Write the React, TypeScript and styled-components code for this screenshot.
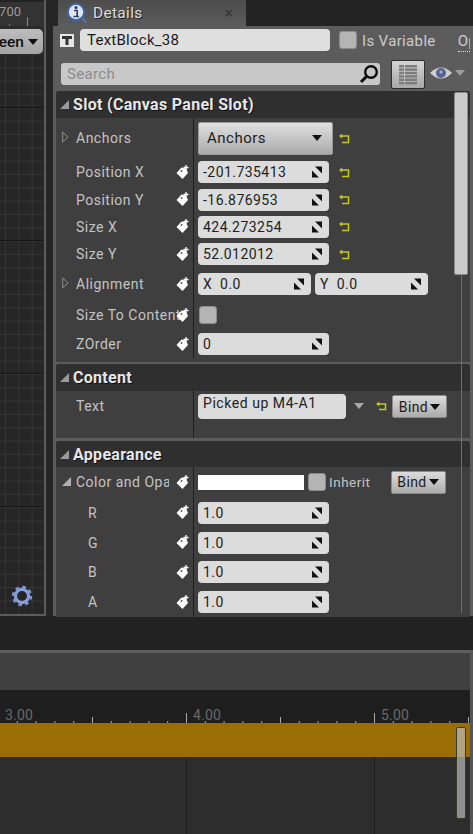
import React from "react";
import styled, { createGlobalStyle } from "styled-components";

const GlobalStyle = createGlobalStyle`
    html, body {
        margin: 0;
        padding: 0;
        background: #222222;
        overflow: hidden;
    }
    * {
        box-sizing: border-box;
    }
`;

const Page = styled.div`
    width: 473px;
    height: 834px;
    display: flex;
    flex-direction: column;
    overflow: hidden;
    background: #222222;
    font-family: Roboto, "Liberation Sans", sans-serif;
`;

const TopArea = styled.div`
    height: 616px;
    display: flex;
    flex-shrink: 0;
`;

/* left graph panel */
const GraphPanel = styled.div`
    width: 46px;
    flex-shrink: 0;
    display: flex;
    flex-direction: column;
    border-right: 2px solid #5c5c5c;
    border-bottom: 2px solid #5c5c5c;
    position: relative;
    overflow: hidden;
`;

const GraphRuler = styled.div`
    height: 24px;
    margin-top: 2px;
    flex-shrink: 0;
    background-color: #333333;
    background-image:
        linear-gradient(90deg, #8a8a8a 1px, transparent 1px),
        linear-gradient(90deg, #777777 1px, transparent 1px);
    background-size: 1px 9px, 18px 2px;
    background-position: 27px 100%, 9px 100%;
    background-repeat: no-repeat, repeat-x;
    color: #9a9a9a;
    font-size: 13px;
    line-height: 20px;
    display: flex;
    justify-content: flex-end;
    padding-right: 23px;
    white-space: nowrap;
`;

const GraphToolbar = styled.div`
    height: 29px;
    flex-shrink: 0;
    display: flex;
    justify-content: flex-end;
    align-items: flex-start;
    background: #2b2b2b;
    padding-top: 3px;
    padding-right: 1px;
`;

const ScreenCombo = styled.div`
    height: 25px;
    flex-shrink: 0;
    display: flex;
    align-items: center;
    gap: 4px;
    padding: 0 5px;
    border-radius: 5px;
    background: linear-gradient(#bdbdbd, #a4a4a4);
    color: #111111;
    font-size: 15.5px;
    font-weight: 500;
    white-space: nowrap;
`;

const GraphCanvas = styled.div`
    flex: 1;
    position: relative;
    background-color: #262626;
    background-image:
        linear-gradient(#161616 1px, transparent 1px),
        linear-gradient(#343434 1px, transparent 1px),
        linear-gradient(90deg, #343434 1px, transparent 1px);
    background-size: 100% 133px, 13.33px 13.33px, 13.33px 13.33px;
    background-position: 0 52px, 0 -1px, 5px 0;
`;

const GearSlot = styled.div`
    position: absolute;
    left: 11px;
    bottom: 7px;
    width: 22px;
    height: 22px;
`;

const Gutter = styled.div`
    width: 7px;
    flex-shrink: 0;
    background: #262626;
`;

/* details panel */
const DetailsPanel = styled.div`
    flex: 1;
    min-width: 0;
    display: flex;
    flex-direction: column;
    position: relative;
`;

const TabStrip = styled.div`
    height: 26px;
    flex-shrink: 0;
    display: flex;
    background: #232323;
`;

const TabNeck = styled.div`
    width: 5px;
    flex-shrink: 0;
    background: #262626;
`;

const DetailsTab = styled.div`
    width: 188px;
    display: flex;
    align-items: center;
    padding: 0 13px 0 8px;
    background: linear-gradient(#4c4c4c, #5c5c5c);
    color: #dcdcdc;
    font-size: 15.5px;
    letter-spacing: 0.3px;
    text-shadow: 1px 1px 0 #222222;
`;

const TabTitle = styled.span`
    flex: 1;
    margin-left: 5px;
`;

const TabClose = styled.span`
    color: #3a3a3a;
    font-size: 15px;
    font-weight: 700;
    text-shadow: none;
`;

const PanelBody = styled.div`
    flex: 1;
    min-height: 0;
    display: flex;
    flex-direction: column;
    background: #5c5c5c;
    padding: 0 3px 3px 3px;
    position: relative;
`;

const NameRow = styled.div`
    height: 34px;
    flex-shrink: 0;
    display: flex;
    align-items: flex-start;
    padding-top: 3px;
    overflow: hidden;
`;

const TypeBadge = styled.div`
    width: 14px;
    height: 13px;
    margin: 5px 6px 0 4px;
    flex-shrink: 0;
    display: flex;
    align-items: center;
    justify-content: center;
    background: #e6e6e6;
`;

const NameInput = styled.div`
    width: 250px;
    height: 22px;
    flex-shrink: 0;
    display: flex;
    align-items: center;
    padding-left: 7px;
    border-radius: 4px;
    background: #dfdfdf;
    color: #1a1a1a;
    font-size: 15px;
    letter-spacing: 0.25px;
`;

const CheckBox = styled.div<{ $margin?: string }>`
    width: 18px;
    height: 18px;
    flex-shrink: 0;
    margin: ${props => props.$margin || "0"};
    border-radius: 3px;
    background: #b4b4b4;
    border: 1px solid #8c8c8c;
`;

const OptionLabel = styled.span`
    color: #cccccc;
    font-size: 15px;
    letter-spacing: 0.35px;
    white-space: nowrap;
`;

const VariableLabel = styled(OptionLabel)`
    margin: 3px 0 0 5px;
`;

const OptionsLink = styled(OptionLabel)`
    margin: 3px 0 0 22px;
    padding-bottom: 2px;
    border-bottom: 1px dotted #dddddd;
    height: 20px;
`;

const SearchRow = styled.div`
    height: 31px;
    flex-shrink: 0;
    display: flex;
    align-items: flex-start;
`;

const SearchBox = styled.div`
    width: 319px;
    height: 22px;
    margin: 3px 0 0 5px;
    flex-shrink: 0;
    display: flex;
    align-items: center;
    justify-content: space-between;
    padding: 0 1px 0 6px;
    border-radius: 3px;
    background: #c8c8c8;
    color: #8c8c8c;
    font-size: 15px;
    letter-spacing: 0.35px;
`;

const GridButton = styled.div`
    width: 34px;
    height: 29px;
    margin-left: 11px;
    flex-shrink: 0;
    display: flex;
    align-items: center;
    justify-content: center;
    border-radius: 2px;
    border: 1px solid #2e2e2e;
    background: linear-gradient(#d4d4d4, #a8a8a8);
`;

const EyeSlot = styled.div`
    margin: 6px 0 0 5px;
    display: flex;
    align-items: center;
    gap: 3px;
`;

const Section = styled.section<{ $grow?: boolean; $gap?: number }>`
    flex-shrink: 0;
    flex-grow: ${props => (props.$grow ? 1 : 0)};
    min-height: 0;
    overflow: hidden;
    background: #3f3f3f;
    border-radius: 3px 3px 0 0;
    margin-bottom: ${props => props.$gap ?? 0}px;
`;

const SectionHeader = styled.div<{ $h: number }>`
    height: ${props => props.$h}px;
    display: flex;
    align-items: center;
    background: #2f2f2f;
    color: #e6e6e6;
    font-size: 16px;
    font-weight: 700;
    letter-spacing: 0.3px;
    text-shadow: 1px 1px 0 #111111;
    padding-left: 4px;
    gap: 4px;
`;

const Row = styled.div<{ $h: number }>`
    height: ${props => props.$h}px;
    display: flex;
`;

const NameCell = styled.div<{ $indent?: number; $raise?: number }>`
    width: 137px;
    flex-shrink: 0;
    display: flex;
    align-items: center;
    padding-left: ${props => props.$indent ?? 20}px;
    padding-right: 4px;
    padding-bottom: ${props => props.$raise ?? 0}px;
    position: relative;
    overflow: hidden;
`;

const Twist = styled.div`
    position: absolute;
    left: 6px;
    top: 50%;
    margin-top: -7px;
    width: 9px;
    height: 12px;
    display: flex;
`;

const Label = styled.span<{ $clip?: number }>`
    flex: 1;
    min-width: 0;
    color: #c4c4c4;
    font-size: 14px;
    letter-spacing: 0.5px;
    white-space: nowrap;
    ${props => props.$clip ? `max-width: ${props.$clip}px; overflow: hidden; margin-right: auto;` : ""}
`;

const ValueCell = styled.div<{ $align?: string }>`
    flex: 1;
    min-width: 0;
    display: flex;
    align-items: ${props => props.$align || "center"};
    border-left: 1px solid #1e1e1e;
    padding-left: 4px;
`;

const Field = styled.div<{ $w: number }>`
    width: ${props => props.$w}px;
    height: 22px;
    flex-shrink: 0;
    display: flex;
    align-items: center;
    justify-content: space-between;
    padding: 0 6px 0 5px;
    border-radius: 4px;
    background: #dcdcdc;
    color: #222222;
    font-size: 14px;
    letter-spacing: 0.45px;
    white-space: pre;
`;

const FieldGap = styled.div`
    width: 4px;
    flex-shrink: 0;
`;

const AnchorCombo = styled.div`
    width: 135px;
    height: 33px;
    flex-shrink: 0;
    display: flex;
    align-items: center;
    justify-content: space-between;
    padding: 0 10px 0 8px;
    border: 1px solid #9a9a9a;
    border-radius: 2px;
    background: linear-gradient(#e0e0e0, #ababab);
    color: #1c1c1c;
    font-size: 15px;
    letter-spacing: 0.5px;
`;

const ResetSlot = styled.div<{ $left: number }>`
    margin-left: ${props => props.$left}px;
    display: flex;
    flex-shrink: 0;
`;

const TextField = styled.div`
    width: 148px;
    height: 25px;
    margin-top: 3px;
    flex-shrink: 0;
    padding: 1px 0 0 5px;
    border-radius: 4px;
    background: #dcdcdc;
    color: #222222;
    font-size: 14px;
    letter-spacing: 0.55px;
    white-space: nowrap;
`;

const BindButton = styled.div<{ $left: number; $top?: number }>`
    width: 55px;
    height: 23px;
    margin-left: ${props => props.$left}px;
    margin-top: ${props => props.$top ?? 0}px;
    flex-shrink: 0;
    display: flex;
    align-items: center;
    justify-content: center;
    gap: 2px;
    border: 1px solid #8a8a8a;
    border-radius: 2px;
    background: linear-gradient(#dcdcdc, #ababab);
    color: #1c1c1c;
    font-size: 14px;
    letter-spacing: 0.4px;
`;

const Swatch = styled.div`
    width: 106px;
    height: 15px;
    flex-shrink: 0;
    background: #ffffff;
`;

const InheritLabel = styled(Label)`
    flex: none;
    margin-left: 3px;
    font-size: 13.5px;
`;

const ScrollThumb = styled.div`
    position: absolute;
    right: 5px;
    top: 66px;
    width: 14px;
    height: 183px;
    background: #c9c9c9;
    border-radius: 2px;
    border: 1px solid #8e8e8e;
`;

const ScrollTrack = styled.div`
    position: absolute;
    left: 408px;
    top: 249px;
    bottom: 3px;
    width: 1px;
    background: #6e6e6e;
`;

/* sequencer strip */
const BlackBand = styled.div`
    height: 34px;
    flex-shrink: 0;
    background: #222222;
`;

const Timeline = styled.div`
    flex: 1;
    min-height: 0;
    display: flex;
    flex-direction: column;
    border-top: 3px solid #5e5e5e;
    border-right: 3px solid #555555;
    position: relative;
`;

const TimelineHead = styled.div`
    height: 37px;
    flex-shrink: 0;
    background: #404040;
`;

const Ruler = styled.div`
    height: 33px;
    flex-shrink: 0;
    display: flex;
    background: #1e1e1e;
    overflow: hidden;
    padding-left: 0;
`;

const RulerCell = styled.div<{ $first?: boolean }>`
    width: 188px;
    margin-left: ${props => (props.$first ? -2 : 0)}px;
    flex-shrink: 0;
    position: relative;
    padding: 17px 0 0 7px;
    color: #686868;
    font-size: 14px;
    letter-spacing: 0.2px;
    line-height: 16px;
`;

const RulerTicks = styled.svg`
    position: absolute;
    left: 0;
    bottom: 0;
`;

const GoldTrack = styled.div`
    height: 34px;
    flex-shrink: 0;
    background: #9a6e04;
`;

const LowerTrack = styled.div`
    flex: 1;
    background-color: #2d2d2d;
    background-image: linear-gradient(90deg, #1c1c1c 1px, transparent 1px);
    background-size: 188px 100%;
    background-position: -2px 0;
`;

const TimelineThumb = styled.div`
    position: absolute;
    left: 456px;
    top: 74px;
    width: 10px;
    height: 92px;
    border-radius: 2px;
    border: 1px solid #3a3a2a;
    background: rgba(190, 190, 190, 0.68);
`;

function TagIcon() {
    return (
        <svg width="13" height="15" viewBox="0 0 13 15" style={{ flexShrink: 0, position: "relative" }}>
            <polygon points="5.5,2.5 10,3.5 12,8 6.5,14 0.5,8" fill="#ffffff" />
            <circle cx="5.5" cy="6" r="0.9" fill="#555555" />
            <path d="M10 0v5M7.5 2.5h5" stroke="#ffffff" strokeWidth="1.3" />
        </svg>
    );
}

function SpinIcon() {
    return (
        <svg width="12" height="12" viewBox="0 0 12 12" style={{ flexShrink: 0 }}>
            <polygon points="4,0.5 11,0.5 11,7.5" fill="#111111" />
            <polygon points="1,4.5 8,11.5 1,11.5" fill="#111111" />
        </svg>
    );
}

function ResetIcon() {
    return (
        <svg width="11" height="11" viewBox="0 0 11 11">
            <path d="M2 3H9.5V9.5H3" fill="none" stroke="#c6c81e" strokeWidth="1.5" />
            <polygon points="0,3 3.2,0.4 3.2,5.6" fill="#c6c81e" />
        </svg>
    );
}

function DownArrow({ color = "#111111", w = 10 }: { color?: string; w?: number }) {
    return (
        <svg width={w} height={w * 0.6} viewBox="0 0 10 6" style={{ flexShrink: 0 }}>
            <polygon points="0,0 10,0 5,6" fill={color} />
        </svg>
    );
}

function SectionArrow() {
    return (
        <svg width="9" height="9" viewBox="0 0 9 9" style={{ flexShrink: 0 }}>
            <polygon points="9,0 9,9 0,9" fill="#9a9a9a" />
        </svg>
    );
}

function TwistClosed() {
    return (
        <svg width="7" height="12" viewBox="0 0 7 12">
            <polygon points="0.7,1 6,6 0.7,11" fill="none" stroke="#8e8e8e" strokeWidth="1" />
        </svg>
    );
}

function TwistOpen() {
    return (
        <svg width="9" height="12" viewBox="0 0 9 12">
            <polygon points="9,2 9,11 0,11" fill="#b0b0b0" />
        </svg>
    );
}

function DetailsIcon() {
    return (
        <svg width="22" height="22" viewBox="0 0 22 22" style={{ flexShrink: 0 }}>
            <path d="M15 15l5.5 5.5" stroke="#4a76b8" strokeWidth="2.4" />
            <circle cx="10" cy="10" r="8.2" fill="#dfe4ee" stroke="#3f63a8" strokeWidth="2" />
            <circle cx="10" cy="5.6" r="1.6" fill="#33425e" />
            <path d="M8 8.5h3.2v6H13M7.5 14.5h5" fill="none" stroke="#33425e" strokeWidth="1.6" />
        </svg>
    );
}

function TextBadgeIcon() {
    return (
        <svg width="10" height="9" viewBox="0 0 10 9">
            <path d="M0 0H10V3H6.5V9H3.5V3H0Z" fill="#333333" />
        </svg>
    );
}

function SearchIcon() {
    return (
        <svg width="20" height="20" viewBox="0 0 20 20" style={{ flexShrink: 0 }}>
            <circle cx="12" cy="8" r="5.8" fill="none" stroke="#0c0c0c" strokeWidth="2.4" />
            <path d="M7.5 12.5L2 18" stroke="#0c0c0c" strokeWidth="3" />
        </svg>
    );
}

function GridIcon() {
    const rows = [0, 1, 2, 3, 4, 5];
    return (
        <svg width="18" height="20" viewBox="0 0 18 20">
            {rows.map(r => (
                <g key={r} fill="#7c7c7c">
                    <rect x="0" y={r * 3.4} width="5" height="2.4" />
                    <rect x="6" y={r * 3.4} width="12" height="2.4" />
                </g>
            ))}
        </svg>
    );
}

function EyeIcon() {
    return (
        <svg width="22" height="14" viewBox="0 0 22 14" style={{ flexShrink: 0 }}>
            <path d="M0 7Q11 -4 22 7Q11 18 0 7Z" fill="#cfcfcf" />
            <circle cx="11" cy="7" r="5" fill="#57648e" />
            <circle cx="11" cy="6" r="1.6" fill="#a9b3cf" />
        </svg>
    );
}

function GearIcon() {
    return (
        <svg width="22" height="22" viewBox="0 0 22 22">
            <circle cx="11" cy="11" r="6.6" fill="none" stroke="#86a0dc" strokeWidth="3.2" />
            <circle cx="11" cy="11" r="9" fill="none" stroke="#7f98d4" strokeWidth="2.4" strokeDasharray="3.6 3.47" />
        </svg>
    );
}

function Ticks() {
    const minor = [1, 2, 3, 4, 6, 7, 8, 9];
    return (
        <RulerTicks width="188" height="12">
            <rect x="0" y="2" width="1" height="10" fill="#a8a8a8" />
            <rect x="94" y="6" width="1" height="6" fill="#a8a8a8" />
            {minor.map(i => (
                <rect key={i} x={i * 18.8} y="10" width="1" height="2" fill="#a8a8a8" />
            ))}
        </RulerTicks>
    );
}

interface PropertyProps {
    label: string;
    h: number;
    indent?: number;
    twist?: "closed" | "open";
    bound?: boolean;
    align?: string;
    raise?: number;
    clip?: number;
    children?: React.ReactNode;
}

function Property({ label, h, indent, twist, bound = true, align, raise, clip, children }: PropertyProps) {
    return (
        <Row $h={h}>
            <NameCell $indent={indent} $raise={raise}>
                {twist && <Twist>{twist === "closed" ? <TwistClosed /> : <TwistOpen />}</Twist>}
                <Label $clip={clip}>{label}</Label>
                {bound && <TagIcon />}
            </NameCell>
            <ValueCell $align={align}>{children}</ValueCell>
        </Row>
    );
}

function NumberField({ value, w = 131 }: { value: string; w?: number }) {
    return (
        <Field $w={w}>
            {value}
            <SpinIcon />
        </Field>
    );
}

const transformRows = [
    { label: "Position X", value: "-201.735413", h: 28 },
    { label: "Position Y", value: "-16.876953", h: 27 },
    { label: "Size X", value: "424.273254", h: 27 },
    { label: "Size Y", value: "52.012012", h: 28 },
];

const colorRows = [
    { label: "R", h: 31 },
    { label: "G", h: 29 },
    { label: "B", h: 30 },
    { label: "A", h: 30 },
];

export default function App() {
    return (
        <>
            <GlobalStyle />
            <Page>
                <TopArea>
                    <GraphPanel>
                        <GraphRuler>1700</GraphRuler>
                        <GraphToolbar>
                            <ScreenCombo>
                                Fill Screen
                                <DownArrow />
                            </ScreenCombo>
                        </GraphToolbar>
                        <GraphCanvas>
                            <GearSlot>
                                <GearIcon />
                            </GearSlot>
                        </GraphCanvas>
                    </GraphPanel>
                    <Gutter />
                    <DetailsPanel>
                        <TabStrip>
                            <TabNeck />
                            <DetailsTab>
                                <DetailsIcon />
                                <TabTitle>Details</TabTitle>
                                <TabClose>×</TabClose>
                            </DetailsTab>
                        </TabStrip>
                        <PanelBody>
                            <NameRow>
                                <TypeBadge>
                                    <TextBadgeIcon />
                                </TypeBadge>
                                <NameInput>TextBlock_38</NameInput>
                                <CheckBox $margin="2px 0 0 9px" />
                                <VariableLabel>Is Variable</VariableLabel>
                                <OptionsLink>Options</OptionsLink>
                            </NameRow>
                            <SearchRow>
                                <SearchBox>
                                    Search
                                    <SearchIcon />
                                </SearchBox>
                                <GridButton>
                                    <GridIcon />
                                </GridButton>
                                <EyeSlot>
                                    <EyeIcon />
                                    <DownArrow color="#9c9c9c" />
                                </EyeSlot>
                            </SearchRow>
                            <Section $gap={2}>
                                <SectionHeader $h={27}>
                                    <SectionArrow />
                                    Slot (Canvas Panel Slot)
                                </SectionHeader>
                                <Property label="Anchors" h={40} twist="closed" bound={false}>
                                    <AnchorCombo>
                                        Anchors
                                        <DownArrow />
                                    </AnchorCombo>
                                    <ResetSlot $left={6}>
                                        <ResetIcon />
                                    </ResetSlot>
                                </Property>
                                {transformRows.map(row => (
                                    <Property key={row.label} label={row.label} h={row.h}>
                                        <NumberField value={row.value} />
                                        <ResetSlot $left={10}>
                                            <ResetIcon />
                                        </ResetSlot>
                                    </Property>
                                ))}
                                <Property label="Alignment" h={32} twist="closed">
                                    <NumberField value="X  0.0" w={113} />
                                    <FieldGap />
                                    <NumberField value="Y  0.0" w={113} />
                                </Property>
                                <Property label="Size To Content" h={30}>
                                    <CheckBox $margin="0 0 0 1px" />
                                </Property>
                                <Property label="ZOrder" h={28}>
                                    <NumberField value="0" />
                                </Property>
                                <Row $h={4} />
                            </Section>
                            <Section $gap={3}>
                                <SectionHeader $h={27}>
                                    <SectionArrow />
                                    Content
                                </SectionHeader>
                                <Property label="Text" h={47} bound={false} align="flex-start" raise={17}>
                                    <TextField>Picked up M4-A1</TextField>
                                    <ResetSlot $left={8}>
                                        <svg width="10" height="25" viewBox="0 0 10 25">
                                            <polygon points="0,12 10,12 5,18" fill="#a8a8a8" />
                                        </svg>
                                    </ResetSlot>
                                    <ResetSlot $left={12}>
                                        <svg width="11" height="26" viewBox="0 0 11 26">
                                            <path d="M2 13H9.5V18.5H3" fill="none" stroke="#c6c81e" strokeWidth="1.5" />
                                            <polygon points="0,13 3.2,10.4 3.2,15.6" fill="#c6c81e" />
                                        </svg>
                                    </ResetSlot>
                                    <BindButton $left={5} $top={4}>
                                        Bind
                                        <DownArrow />
                                    </BindButton>
                                </Property>
                            </Section>
                            <Section $grow>
                                <SectionHeader $h={26}>
                                    <SectionArrow />
                                    Appearance
                                </SectionHeader>
                                <Property label="Color and Opacity" h={30} twist="open" clip={93}>
                                    <Swatch />
                                    <CheckBox $margin="0 0 0 4px" />
                                    <InheritLabel>Inherit</InheritLabel>
                                    <BindButton $left={20}>
                                        Bind
                                        <DownArrow />
                                    </BindButton>
                                </Property>
                                {colorRows.map(row => (
                                    <Property key={row.label} label={row.label} h={row.h} indent={32}>
                                        <NumberField value="1.0" />
                                    </Property>
                                ))}
                            </Section>
                            <ScrollTrack />
                            <ScrollThumb />
                        </PanelBody>
                    </DetailsPanel>
                </TopArea>
                <BlackBand />
                <Timeline>
                    <TimelineHead />
                    <Ruler>
                        <RulerCell $first>
                            3.00
                            <Ticks />
                        </RulerCell>
                        <RulerCell>
                            4.00
                            <Ticks />
                        </RulerCell>
                        <RulerCell>
                            5.00
                            <Ticks />
                        </RulerCell>
                    </Ruler>
                    <GoldTrack />
                    <LowerTrack />
                    <TimelineThumb />
                </Timeline>
            </Page>
        </>
    );
}
